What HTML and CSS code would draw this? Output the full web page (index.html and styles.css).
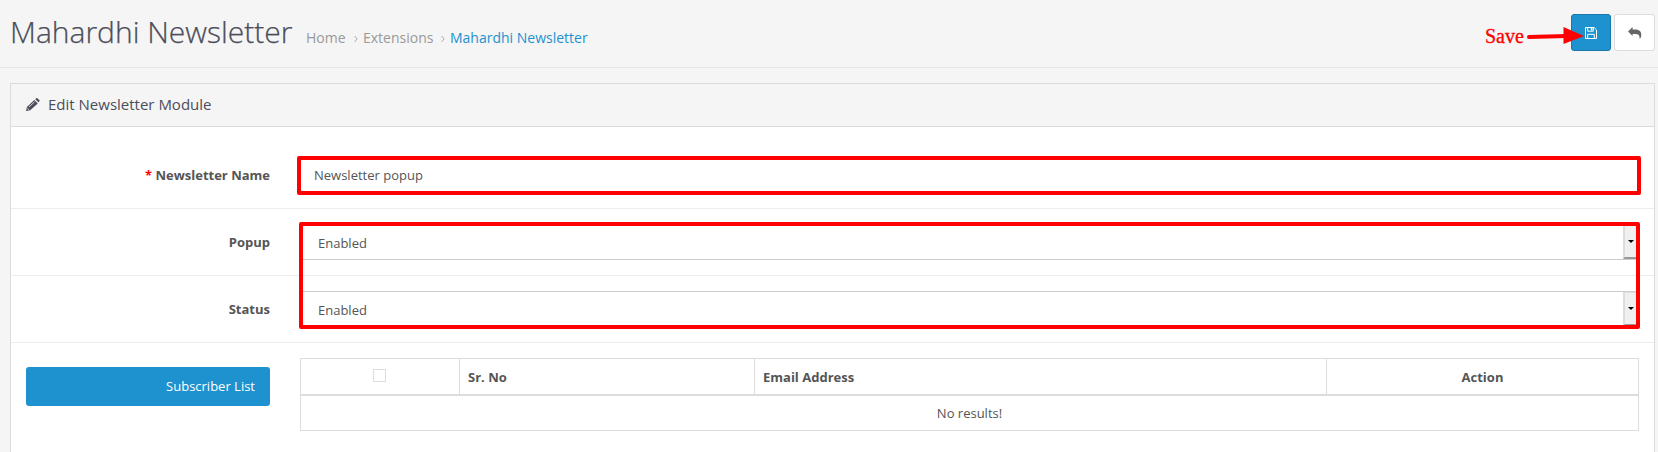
FILE: index.html
```html
<!DOCTYPE html>
<html lang="en">
<head>
<meta charset="utf-8">
<title>Mahardhi Newsletter</title>
<link rel="stylesheet" href="styles.css">
</head>
<body>
<header class="page-header">
  <h1 class="title">Mahardhi Newsletter</h1>
  <nav class="breadcrumb">
    <a class="crumb crumb-home">Home</a>
    <svg class="sep" viewBox="0 0 4 8"><path d="M.5 1 3.2 4 .5 7"/></svg>
    <a class="crumb crumb-ext">Extensions</a>
    <svg class="sep" viewBox="0 0 4 8"><path d="M.5 1 3.2 4 .5 7"/></svg>
    <a class="crumb current">Mahardhi Newsletter</a>
  </nav>
  <div class="actions">
    <button class="btn btn-save" aria-label="Save"><svg width="12" height="12" viewBox="0 0 12 12"><path d="M.5.5h8.6l2.4 2.4v8.6H.5zM2.7.5v3.7h5.6V.5M2.7 11.5V7.3h6.6v4.2" fill="none" stroke="#fff"/><path d="M5.8 1h1.6v2.4H5.8z" fill="#fff"/></svg></button>
    <button class="btn btn-back" aria-label="Back"><svg width="14" height="12" viewBox="0 0 14 12"><path d="M0 4.4 4.6 0v2.5h2.1c4.4 0 6.600 1.900 6.600 5 0 1.600-.3 3-1.200 4.100-.3.2-.6 0-.5-.3.100-3.400-1.300-4.300-4.900-4.300H4.600v1.900z" fill="#666"/></svg></button>
  </div>
  <div class="save-note"><span class="save-text">Save</span><svg class="arrow" width="60" height="20" viewBox="0 0 60 20"><path d="M4 11 42 10" stroke="#f00" stroke-width="4" stroke-linecap="round"/><path d="M38.500 1v17L59 10z" fill="#f00"/></svg></div>
</header>
<main class="panel">
  <div class="panel-heading">
    <svg class="pencil" width="14" height="13" viewBox="0 0 14 13"><path d="M0 13 .9 9 8.300 2l3.500 3.500L4.200 12.200zM9.200 1.200 10.200.3q.7-.5 1.400.1l1.700 1.700q.6.700 0 1.300l-.8.9z" fill="#4c4d5a"/><path d="M1.300 10.200 2.900 11.700M3 8.900l5.500-5" stroke="#f5f5f5" stroke-width=".8"/></svg>
    <span>Edit Newsletter Module</span>
  </div>
  <div class="panel-body">
    <div class="row"><label class="label"><span class="req">*</span> Newsletter Name</label><div class="field input">Newsletter popup</div></div>
    <div class="row"><label class="label">Popup</label><div class="field select">Enabled<span class="drop"></span></div></div>
    <div class="row"><label class="label">Status</label><div class="field select">Enabled<span class="drop"></span></div></div>
    <div class="row list-row">
      <button class="subscriber">Subscriber List</button>
      <div class="table">
        <div class="thead"><div class="cell center"><span class="check"></span></div><div class="cell">Sr. No</div><div class="cell">Email Address</div><div class="cell center">Action</div></div>
        <div class="empty">No results!</div>
      </div>
    </div>
    <div class="mark mark-name"></div>
    <div class="mark mark-status"></div>
  </div>
</main>
</body>
</html>
```
FILE: styles.css
```css
* { box-sizing: border-box; }
body { margin: 0; height: 452px; overflow: hidden; background: #f5f5f5; color: #555; font: 13px/20px "Open Sans", sans-serif; }
button { font: inherit; }
.page-header { position: relative; display: flex; align-items: baseline; height: 68px; padding: 11px 3px 0 10px; border-bottom: 1px solid #e6e6e6; }
.title { margin: 0; width: 296px; font-size: 30px; line-height: 42px; font-weight: 300; color: #4c4d5a; white-space: nowrap; -webkit-text-stroke: .25px #4c4d5a; }
.breadcrumb { display: flex; align-items: baseline; font-size: 14px; white-space: nowrap; }
.crumb { color: #999; }
.crumb-home { width: 48px; }
.crumb-ext { width: 78px; }
.current { color: #1e91cf; }
.sep { width: 4px; height: 8px; margin-right: 5px; fill: none; stroke: #aaa; }
.actions { display: flex; gap: 3px; margin-left: auto; align-self: flex-start; padding-top: 3px; }
.btn { display: flex; justify-content: center; width: 40px; height: 37px; padding: 12px 0 0; border-radius: 3px; border: 1px solid #1978ab; background: #1e91cf; }
.btn-back { width: 41px; border-color: #ddd; background: #fff; }
.save-note { position: absolute; left: 1485px; top: 25px; display: flex; }
.save-text { width: 40px; color: #f00; font: 20px/23px "Liberation Serif", serif; -webkit-text-stroke: .3px #f00; }
.arrow { margin-top: 1px; }
.panel { margin: 15px 3px 0 10px; height: 380px; border: 1px solid #dcdcdc; background: #fff; }
.panel-heading { display: flex; align-items: center; gap: 8px; height: 43px; padding: 0 15px 3px; background: #f5f5f5; border-bottom: 1px solid #dcdcdc; color: #4c4d5a; font-size: 15px; }
.pencil { margin-top: 2px; }
.panel-body { position: relative; padding-top: 15px; }
.row { display: grid; grid-template-columns: 244px 1339px; column-gap: 30px; height: 67px; padding: 15px; border-bottom: 1px solid #ededed; }
.label { padding-top: 8px; text-align: right; font-weight: 700; }
.req { color: #f00; }
.field { display: flex; height: 36px; padding: 7px 13px; border: 1px solid #ccc; }
.select { padding: 8px 1px 0 17px; }
.drop { width: 14px; height: 34px; margin: -8px 0 0 auto; border-left: 2px solid #ddd; border-bottom: 2px solid #999; border-top: 1px solid #ddd; background: #efefef; display: flex; align-items: center; justify-content: center; }
.drop::after { content: ""; border: 3px solid transparent; border-top-color: #000; border-bottom: 0; }
.list-row { border: 0; height: auto; }
.subscriber { height: 39px; margin-top: 9px; padding: 0 15px 1px; border: 0; border-radius: 3px; background: #1e91cf; color: #fff; text-align: right; }
.table { border: 1px solid #ddd; }
.thead { display: grid; grid-template-columns: 158px 295px 572px 1fr; height: 37px; border-bottom: 2px solid #ddd; font-weight: 700; }
.cell { padding: 8px; border-left: 1px solid #ddd; }
.cell:first-child { border-left: 0; }
.center { display: flex; justify-content: center; }
.check { width: 13px; height: 13px; margin: 2px 1px 0 0; border: 1px solid #ddd; }
.empty { height: 34px; line-height: 34px; text-align: center; }
.mark { position: absolute; border: 4px solid #f00; border-radius: 2px; pointer-events: none; }
.mark-name { left: 286px; top: 29px; width: 1344px; height: 39px; }
.mark-status { left: 288px; top: 95px; width: 1341px; height: 107px; }
```
